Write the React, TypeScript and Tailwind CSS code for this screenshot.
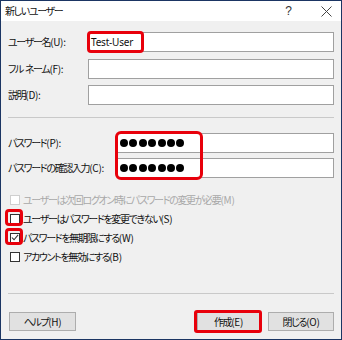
import React from "react";

const jp = {
  fontFamily: '"Noto Sans CJK JP", "Noto Sans", sans-serif',
  fontFeatureSettings: '"palt"',
} as React.CSSProperties;

function T({ t }: { t: string }) {
  const parts = t.split(/([\x20-\x7e]+)/).filter((p) => p.length > 0);
  return (
    <>
      {parts.map((p, i) =>
        /^[\x20-\x7e]+$/.test(p) ? (
          <span key={i} className="tracking-[-0.3px]">
            {p}
          </span>
        ) : (
          <span key={i}>{p}</span>
        )
      )}
    </>
  );
}

function Field({ children, className = "" }: { children?: React.ReactNode; className?: string }) {
  return (
    <div className={`relative h-[20px] bg-white border border-[#a0a0a0] flex items-center ${className}`}>
      {children}
    </div>
  );
}

function Dots() {
  return (
    <div className="flex gap-[1.4px] pl-[2px]">
      {Array.from({ length: 7 }).map((_, i) => (
        <span key={i} className="w-[8px] h-[8px] rounded-full bg-black" />
      ))}
    </div>
  );
}

function Check({ checked = false, disabled = false }: { checked?: boolean; disabled?: boolean }) {
  return (
    <span
      className={`w-[10px] h-[10px] shrink-0 border flex items-center justify-center bg-white ${
        disabled ? "border-[#cfcfcf]" : "border-[#333]"
      }`}
    >
      {checked && (
        <svg width="9" height="9" viewBox="0 0 9 9">
          <path d="M1 4.5 L3.4 7 L8 1.5" fill="none" stroke="#333" strokeWidth="1.2" />
        </svg>
      )}
    </span>
  );
}

export default function App() {
  return (
    <div
      className="w-[342px] h-[340px] border border-[#1b3563] flex flex-col text-[10px] tracking-[-1.35px] text-[#111] leading-none whitespace-nowrap"
      style={jp}
    >
      {/* title bar */}
      <div className="h-[20px] bg-white flex items-center pl-[4px] pr-[5px] shrink-0">
        <span>
          <T t="新しいユーザー" />
        </span>
        <span
          className="ml-auto mr-[29px] text-[12px] tracking-normal text-[#333]"
          style={{ fontFamily: '"Liberation Sans", sans-serif' }}
        >
          ?
        </span>
        <svg width="11" height="11" viewBox="0 0 11 11" className="mr-[4px]">
          <path d="M0.5 0.5 L10.5 10.5 M10.5 0.5 L0.5 10.5" stroke="#444" strokeWidth="1" />
        </svg>
      </div>

      {/* body */}
      <div className="flex-1 bg-[#f0f0f0] flex flex-col pl-[7px] pr-[7px]">
        <div className="flex items-center mt-[11px]">
          <span className="w-[80px]">
            <T t="ユーザー名(U):" />
          </span>
          <Field className="flex-1">
            <span
              className="pl-[2px] text-[10px] tracking-[-0.2px]"
              style={{ fontFamily: '"Noto Sans", sans-serif' }}
            >
              Test-User
            </span>
            <div className="absolute left-[-2px] top-[-2px] w-[57px] h-[22px] border-[3px] border-[#e8000b] rounded-[4px]" />
          </Field>
        </div>
        <div className="flex items-center mt-[7px]">
          <span className="w-[80px]">
            <T t="フル ネーム(F):" />
          </span>
          <Field className="flex-1" />
        </div>
        <div className="flex items-center mt-[6px]">
          <span className="w-[80px]">
            <T t="説明(D):" />
          </span>
          <Field className="flex-1" />
        </div>

        <div className="h-px bg-[#c9c9c9] mt-[12px]" />

        <div className="relative mt-[15px] flex flex-col gap-[5px]">
          <div className="flex items-center">
            <span className="w-[109px]">
              <T t="パスワード(P):" />
            </span>
            <Field className="flex-1">
              <Dots />
            </Field>
          </div>
          <div className="flex items-center">
            <span className="w-[109px]">
              <T t="パスワードの確認入力(C):" />
            </span>
            <Field className="flex-1">
              <Dots />
            </Field>
          </div>
          <div className="absolute left-[107px] top-[-2px] w-[88px] h-[49px] border-[3px] border-[#e8000b] rounded-[6px]" />
        </div>

        <div className="flex flex-col mt-[12px] pl-[2px]">
          <div className="h-[19px] flex items-center gap-[3px] text-[#a8a8a8]">
            <Check disabled />
            <span>
              <T t="ユーザーは次回ログオン時にパスワードの変更が必要(M)" />
            </span>
          </div>
          <div className="relative h-[19px] flex items-center gap-[3px]">
            <Check />
            <span>
              <T t="ユーザーはパスワードを変更できない(S)" />
            </span>
            <div className="absolute left-[-5px] top-[0px] w-[18px] h-[17px] border-[3px] border-[#e8000b] rounded-[4px]" />
          </div>
          <div className="relative h-[19px] flex items-center gap-[3px]">
            <Check checked />
            <span>
              <T t="パスワードを無期限にする(W)" />
            </span>
            <div className="absolute left-[-5px] top-[0px] w-[18px] h-[17px] border-[3px] border-[#e8000b] rounded-[4px]" />
          </div>
          <div className="h-[19px] flex items-center gap-[3px]">
            <Check />
            <span>
              <T t="アカウントを無効にする(B)" />
            </span>
          </div>
        </div>

        <div className="h-px bg-[#c9c9c9] mt-[27px]" />

        <div className="flex items-center mt-[18px]">
          <button className="w-[67px] h-[19px] ml-[1px] bg-[#e1e1e1] border border-[#adadad]">
            <T t="ヘルプ(H)" />
          </button>
          <div className="relative ml-auto">
            <button className="w-[63px] h-[19px] bg-[#e1e1e1] border border-[#adadad]">
              <T t="作成(E)" />
            </button>
            <div className="absolute left-[-3px] top-[-2px] w-[68px] h-[23px] border-[3px] border-[#e8000b] rounded-[3px]" />
          </div>
          <button className="w-[66px] h-[19px] ml-[8px] bg-[#e1e1e1] border border-[#adadad]">
            <T t="閉じる(O)" />
          </button>
        </div>
      </div>
    </div>
  );
}
